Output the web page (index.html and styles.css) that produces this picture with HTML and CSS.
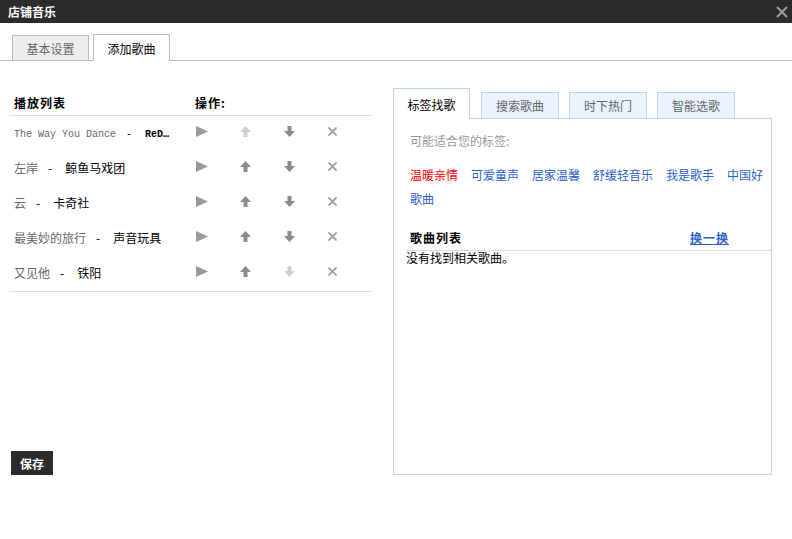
FILE: index.html
```html
<!DOCTYPE html>
<html lang="zh">
<head>
<meta charset="utf-8">
<title>店铺音乐</title>
<link rel="stylesheet" href="styles.css">
</head>
<body>
<div class="titlebar">
  <span class="title">店铺音乐</span>
  <svg class="close" width="12" height="12" viewBox="0 0 12 12"><path d="M1 1 L11 11 M11 1 L1 11" stroke="#9a9a9a" stroke-width="2.2"/></svg>
</div>
<div class="tabs">
  <div class="tab">基本设置</div>
  <div class="tab active">添加歌曲</div>
</div>
<div class="main">
  <div class="left">
    <div class="list-head"><span class="col-song">播放列表</span><span>操作:</span></div>
    <div class="rows">
      <div class="row">
        <div class="song mono"><span class="name">The Way You Dance</span><span class="sep">-</span><span class="artist">ReD…</span></div>
        <span class="op"><svg width="12" height="11" viewBox="0 0 12 11"><polygon points="0,0 12,5.5 0,11" fill="#9a9a9a"/></svg></span>
        <span class="op"><svg width="11" height="11" viewBox="0 0 11 11"><polygon points="5.5,0 11,6 7.5,6 7.5,11 3.5,11 3.5,6 0,6" fill="#cfcfcf"/></svg></span>
        <span class="op"><svg width="11" height="11" viewBox="0 0 11 11"><polygon points="5.5,11 11,5 7.5,5 7.5,0 3.5,0 3.5,5 0,5" fill="#8c8c8c"/></svg></span>
        <span class="op"><svg width="9" height="9" viewBox="0 0 9 9"><path d="M0.5 0.5 L8.5 8.5 M8.5 0.5 L0.5 8.5" stroke="#9a9a9a" stroke-width="1.6"/></svg></span>
      </div>
      <div class="row">
        <div class="song"><span class="name">左岸</span><span class="sep">-</span><span class="artist">鲸鱼马戏团</span></div>
        <span class="op"><svg width="12" height="11" viewBox="0 0 12 11"><polygon points="0,0 12,5.5 0,11" fill="#9a9a9a"/></svg></span>
        <span class="op"><svg width="11" height="11" viewBox="0 0 11 11"><polygon points="5.5,0 11,6 7.5,6 7.5,11 3.5,11 3.5,6 0,6" fill="#8c8c8c"/></svg></span>
        <span class="op"><svg width="11" height="11" viewBox="0 0 11 11"><polygon points="5.5,11 11,5 7.5,5 7.5,0 3.5,0 3.5,5 0,5" fill="#8c8c8c"/></svg></span>
        <span class="op"><svg width="9" height="9" viewBox="0 0 9 9"><path d="M0.5 0.5 L8.5 8.5 M8.5 0.5 L0.5 8.5" stroke="#9a9a9a" stroke-width="1.6"/></svg></span>
      </div>
      <div class="row">
        <div class="song"><span class="name">云</span><span class="sep">-</span><span class="artist">卡奇社</span></div>
        <span class="op"><svg width="12" height="11" viewBox="0 0 12 11"><polygon points="0,0 12,5.5 0,11" fill="#9a9a9a"/></svg></span>
        <span class="op"><svg width="11" height="11" viewBox="0 0 11 11"><polygon points="5.5,0 11,6 7.5,6 7.5,11 3.5,11 3.5,6 0,6" fill="#8c8c8c"/></svg></span>
        <span class="op"><svg width="11" height="11" viewBox="0 0 11 11"><polygon points="5.5,11 11,5 7.5,5 7.5,0 3.5,0 3.5,5 0,5" fill="#8c8c8c"/></svg></span>
        <span class="op"><svg width="9" height="9" viewBox="0 0 9 9"><path d="M0.5 0.5 L8.5 8.5 M8.5 0.5 L0.5 8.5" stroke="#9a9a9a" stroke-width="1.6"/></svg></span>
      </div>
      <div class="row">
        <div class="song"><span class="name">最美妙的旅行</span><span class="sep">-</span><span class="artist">声音玩具</span></div>
        <span class="op"><svg width="12" height="11" viewBox="0 0 12 11"><polygon points="0,0 12,5.5 0,11" fill="#9a9a9a"/></svg></span>
        <span class="op"><svg width="11" height="11" viewBox="0 0 11 11"><polygon points="5.5,0 11,6 7.5,6 7.5,11 3.5,11 3.5,6 0,6" fill="#8c8c8c"/></svg></span>
        <span class="op"><svg width="11" height="11" viewBox="0 0 11 11"><polygon points="5.5,11 11,5 7.5,5 7.5,0 3.5,0 3.5,5 0,5" fill="#8c8c8c"/></svg></span>
        <span class="op"><svg width="9" height="9" viewBox="0 0 9 9"><path d="M0.5 0.5 L8.5 8.5 M8.5 0.5 L0.5 8.5" stroke="#9a9a9a" stroke-width="1.6"/></svg></span>
      </div>
      <div class="row">
        <div class="song"><span class="name">又见他</span><span class="sep">-</span><span class="artist">铁阳</span></div>
        <span class="op"><svg width="12" height="11" viewBox="0 0 12 11"><polygon points="0,0 12,5.5 0,11" fill="#9a9a9a"/></svg></span>
        <span class="op"><svg width="11" height="11" viewBox="0 0 11 11"><polygon points="5.5,0 11,6 7.5,6 7.5,11 3.5,11 3.5,6 0,6" fill="#8c8c8c"/></svg></span>
        <span class="op"><svg width="11" height="11" viewBox="0 0 11 11"><polygon points="5.5,11 11,5 7.5,5 7.5,0 3.5,0 3.5,5 0,5" fill="#cfcfcf"/></svg></span>
        <span class="op"><svg width="9" height="9" viewBox="0 0 9 9"><path d="M0.5 0.5 L8.5 8.5 M8.5 0.5 L0.5 8.5" stroke="#9a9a9a" stroke-width="1.6"/></svg></span>
      </div>
    </div>
    <button class="save">保存</button>
  </div>
  <div class="right">
    <div class="rtabs">
      <div class="rtab active">标签找歌</div>
      <div class="rtab">搜索歌曲</div>
      <div class="rtab">时下热门</div>
      <div class="rtab">智能选歌</div>
    </div>
    <div class="box">
      <div class="hint">可能适合您的标签:</div>
      <div class="tags">
        <a class="tag hot">温暖亲情</a><a class="tag">可爱童声</a><a class="tag">居家温馨</a><a class="tag">舒缓轻音乐</a><a class="tag">我是歌手</a><a class="tag"><span>中国好</span><span>歌曲</span></a>
      </div>
      <div class="songs">
        <div class="songs-head"><span class="bold-wide">歌曲列表</span><a class="swap">换一换</a></div>
        <div class="empty">没有找到相关歌曲。</div>
      </div>
    </div>
  </div>
</div>
</body>
</html>
```

FILE: styles.css
```css
* { box-sizing: border-box; }
html, body { margin: 0; padding: 0; background: #fff; }
body {
  width: 792px;
  height: 539px;
  overflow: hidden;
  font-family: "Noto Sans CJK SC", "Liberation Sans", sans-serif;
  font-size: 12px;
  color: #000;
}
.titlebar {
  height: 23px;
  background: #2b2b2b;
  display: flex;
  align-items: center;
  justify-content: space-between;
  padding: 0 4px 0 8px;
}
.title { color: #fff; font-weight: bold; font-size: 12px; line-height: 23px; }
.close { display: block; }

.tabs {
  height: 38px;
  padding: 11px 0 0 12px;
  display: flex;
  align-items: flex-end;
  gap: 4px;
  border-bottom: 1px solid #bbb;
}
.tab {
  width: 77px;
  height: 25px;
  border: 1px solid #bbb;
  border-bottom: none;
  background: #eee;
  color: #666;
  display: flex;
  align-items: center;
  justify-content: center;
  font-size: 12px;
}
.tab.active {
  height: 27px;
  margin-bottom: -1px;
  background: #fff;
  color: #000;
}

.main {
  display: grid;
  grid-template-columns: 362px 379px;
  column-gap: 22px;
  padding: 27px 0 0 9px;
}

.left { display: flex; flex-direction: column; padding-top: 6px; }
.list-head {
  display: flex;
  height: 22px;
  line-height: 18px;
  padding-left: 5px;
  font-weight: bold;
  letter-spacing: 1px;
  border-bottom: 1px solid #ddd;
}
.col-song { width: 181px; }
.rows { border-bottom: 1px solid #ddd; }
.row {
  height: 35px;
  padding-left: 5px;
  display: grid;
  grid-template-columns: 181px repeat(4, 44px);
  align-items: center;
}
.song { white-space: nowrap; overflow: hidden; padding-bottom: 3px; }
.name { color: #666; }
.sep { margin: 0 13px 0 10px; color: #000; }
.artist { color: #000; }
.mono { font-family: "Liberation Mono", monospace; font-size: 10px; padding-bottom: 0; padding-top: 1px; }
.mono .artist { font-weight: bold; }
.op { display: flex; align-items: center; padding-left: 1px; margin-bottom: 5px; }
.op svg { display: block; }

.save {
  margin-top: auto;
  margin-left: 2px;
  align-self: flex-start;
  width: 42px;
  height: 24px;
  border: none;
  padding: 0;
  background: #2b2b2b;
  color: #fff;
  font-family: inherit;
  font-size: 12px;
  font-weight: bold;
}

.right { display: flex; flex-direction: column; }
.rtabs {
  display: flex;
  align-items: flex-end;
  gap: 10px;
  height: 31px;
  margin-bottom: -1px;
  position: relative;
  z-index: 1;
}
.rtab {
  width: 78px;
  height: 27px;
  border: 1px solid #b5d6f6;
  background: #e8f3fd;
  color: #666;
  display: flex;
  align-items: center;
  justify-content: center;
}
.rtab.active {
  width: 77px;
  height: 31px;
  margin-right: 1px;
  border-bottom: none;
  background: #fff;
  color: #000;
}
.box {
  height: 357px;
  border: 1px solid #b5d6f6;
  padding: 10px 6px 0 16px;
}
.hint { color: #999; line-height: 24px; }
.tags { margin-top: 10px; line-height: 24px; }
.tag { color: #2b5fcb; margin-right: 13px; text-decoration: none; }
.tag.hot { color: #f00; }
.songs { margin: 15px -6px 0 -4px; }
.songs-head {
  display: flex;
  justify-content: space-between;
  height: 25px;
  line-height: 24px;
  padding: 0 42px 0 4px;
  font-weight: bold;
  border-bottom: 1px solid #ddd;
}
.bold-wide { letter-spacing: 1px; }
.swap { color: #2b5fcb; text-decoration: underline; letter-spacing: 1px; }
.empty { line-height: 14px; }
```
